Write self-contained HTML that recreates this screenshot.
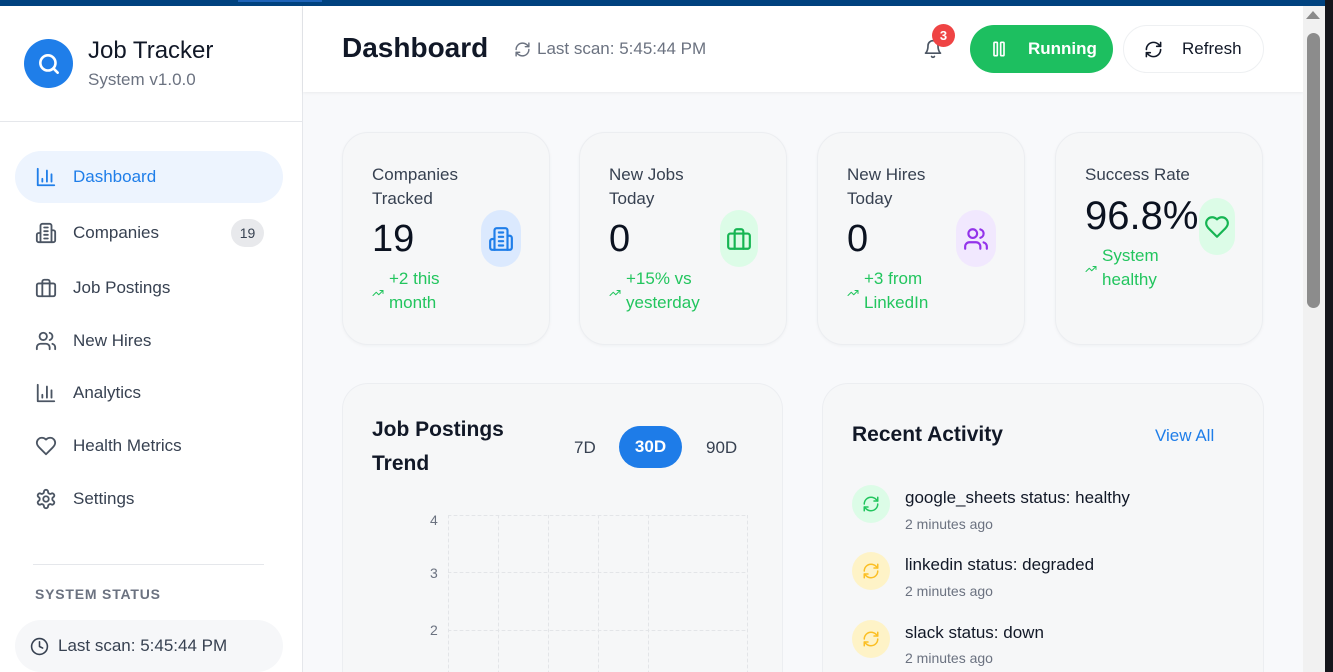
<!DOCTYPE html>
<html><head><meta charset="utf-8"><style>
*{margin:0;padding:0;box-sizing:border-box}
html{width:1333px;height:672px;overflow:hidden}
body{width:1333px;height:672px;overflow:hidden;font-family:"Liberation Sans",sans-serif;background:#f8f9fb;position:relative;color:#111827}
.a{position:absolute}
svg{fill:none;stroke:currentColor;stroke-width:2;stroke-linecap:round;stroke-linejoin:round}
.nav{position:absolute;left:35px;font-size:17px;color:#374151;display:flex;align-items:center}
.nav svg{width:22px;height:22px;margin-right:16px;color:#4b5563}
.card{position:absolute;top:132px;width:208px;height:213px;background:#f6f7f8;border:1px solid #eceef1;border-radius:26px;box-shadow:0 1px 3px rgba(0,0,0,.04)}
.lbl{position:absolute;left:29px;top:30px;font-size:17px;line-height:24px;color:#374151}
.num{position:absolute;left:29px;top:85px;font-size:38px;color:#0b1220}
.tr{position:absolute;left:46px;top:134px;font-size:17px;line-height:24px;color:#22c55e}
.tri{position:absolute;left:29px;top:154px;width:12px;height:12px;color:#22c55e}
.pill{position:absolute;left:138px;top:77px;width:40px;height:57px;border-radius:20px;display:flex;align-items:center;justify-content:center}
.pill svg{width:26px;height:26px}
.ai{position:absolute;left:852px;width:38px;height:38px;border-radius:50%;display:flex;align-items:center;justify-content:center}
.ai svg{width:18px;height:18px}
.at{position:absolute;left:905px;font-size:17px;color:#111827}
.am{position:absolute;left:905px;font-size:14px;color:#6b7280}
</style></head><body>
<div class="a" style="left:0;top:0;width:1333px;height:6px;background:#00427f"></div>
<div class="a" style="left:238px;top:0;width:84px;height:2px;background:#1d63b8"></div>

<!-- sidebar -->
<div class="a" style="left:0;top:6px;width:303px;height:666px;background:#fff;border-right:1px solid #e5e7eb"></div>
<div class="a" style="left:24px;top:39px;width:49px;height:49px;border-radius:50%;background:#1f7ee9;display:flex;align-items:center;justify-content:center"><svg viewBox="0 0 24 24" style="width:26px;height:26px;color:#fff;stroke-width:2.4"><circle cx="11" cy="11" r="7"/><path d="M20 20l-4-4"/></svg></div>
<div class="a" style="left:88px;top:37px;font-size:24px;color:#111827">Job Tracker</div>
<div class="a" style="left:88px;top:70px;font-size:17px;color:#6b7280">System v1.0.0</div>
<div class="a" style="left:0;top:121px;width:302px;height:1px;background:#e5e7eb"></div>
<div class="a" style="left:15px;top:151px;width:268px;height:52px;border-radius:26px;background:#edf4fe"></div>
<div class="nav" style="top:166px;color:#1f7ee9"><svg viewBox="0 0 24 24" style="color:#1f7ee9"><path d="M3 3v18h18"/><path d="M18 17V9M13 17V5M8 17v-3"/></svg>Dashboard</div>
<div class="nav" style="top:222px"><svg viewBox="0 0 24 24"><path d="M6 22V4a2 2 0 0 1 2-2h8a2 2 0 0 1 2 2v18Z"/><path d="M6 12H4a2 2 0 0 0-2 2v6a2 2 0 0 0 2 2h2"/><path d="M18 9h2a2 2 0 0 1 2 2v9a2 2 0 0 1-2 2h-2"/><path d="M10 6h4M10 10h4M10 14h4M10 18h4"/></svg>Companies</div>
<div class="a" style="left:231px;top:219px;width:33px;height:28px;border-radius:14px;background:#e8e9ec;font-size:14px;color:#374151;text-align:center;line-height:28px">19</div>
<div class="nav" style="top:277px"><svg viewBox="0 0 24 24"><rect x="2" y="7" width="20" height="14" rx="2"/><path d="M16 21V5a2 2 0 0 0-2-2h-4a2 2 0 0 0-2 2v16"/></svg>Job Postings</div>
<div class="nav" style="top:330px"><svg viewBox="0 0 24 24"><path d="M16 21v-2a4 4 0 0 0-4-4H6a4 4 0 0 0-4 4v2"/><circle cx="9" cy="7" r="4"/><path d="M22 21v-2a4 4 0 0 0-3-3.87M16 3.13a4 4 0 0 1 0 7.75"/></svg>New Hires</div>
<div class="nav" style="top:382px"><svg viewBox="0 0 24 24"><path d="M3 3v18h18"/><path d="M18 17V9M13 17V5M8 17v-3"/></svg>Analytics</div>
<div class="nav" style="top:435px"><svg viewBox="0 0 24 24"><path d="M19 14c1.49-1.46 3-3.21 3-5.5A5.5 5.5 0 0 0 16.5 3c-1.760 0-3 .5-4.5 2-1.5-1.5-2.74-2-4.5-2A5.5 5.5 0 0 0 2 8.5c0 2.3 1.5 4.05 3 5.5l7 7Z"/></svg>Health Metrics</div>
<div class="nav" style="top:488px"><svg viewBox="0 0 24 24"><path d="M12.22 2h-.44a2 2 0 0 0-2 2v.18a2 2 0 0 1-1 1.73l-.43.25a2 2 0 0 1-2 0l-.15-.08a2 2 0 0 0-2.73.73l-.22.38a2 2 0 0 0 .73 2.73l.15.1a2 2 0 0 1 1 1.72v.51a2 2 0 0 1-1 1.74l-.15.09a2 2 0 0 0-.73 2.73l.22.38a2 2 0 0 0 2.73.73l.15-.08a2 2 0 0 1 2 0l.43.25a2 2 0 0 1 1 1.73V20a2 2 0 0 0 2 2h.44a2 2 0 0 0 2-2v-.18a2 2 0 0 1 1-1.73l.43-.25a2 2 0 0 1 2 0l.15.08a2 2 0 0 0 2.73-.73l.22-.39a2 2 0 0 0-.73-2.73l-.15-.08a2 2 0 0 1-1-1.74v-.5a2 2 0 0 1 1-1.74l.15-.09a2 2 0 0 0 .73-2.73l-.22-.38a2 2 0 0 0-2.73-.73l-.15.08a2 2 0 0 1-2 0l-.43-.25a2 2 0 0 1-1-1.73V4a2 2 0 0 0-2-2z"/><circle cx="12" cy="12" r="3"/></svg>Settings</div>
<div class="a" style="left:33px;top:564px;width:231px;height:1px;background:#e5e7eb"></div>
<div class="a" style="left:35px;top:586px;font-size:14px;font-weight:bold;letter-spacing:.8px;color:#6b7280">SYSTEM STATUS</div>
<div class="a" style="left:15px;top:620px;width:268px;height:52px;border-radius:26px;background:#f6f7f9"></div>
<div class="a" style="left:30px;top:636px;display:flex;align-items:center;font-size:17px;color:#374151"><svg viewBox="0 0 24 24" style="width:19px;height:19px;margin-right:9px"><circle cx="12" cy="12" r="10"/><path d="M12 6v6l4 2"/></svg>Last scan: 5:45:44 PM</div>

<!-- header -->
<div class="a" style="left:303px;top:6px;width:1000px;height:86px;background:#fff;box-shadow:0 1px 3px rgba(0,0,0,.06)"></div>
<div class="a" style="left:342px;top:32px;font-size:28px;font-weight:bold;color:#111827">Dashboard</div>
<div class="a" style="left:514px;top:39px;display:flex;align-items:center;font-size:17px;color:#6b7280"><svg viewBox="0 0 24 24" style="width:17px;height:17px;margin-right:6px"><path d="M3 12a9 9 0 0 1 9-9 9.75 9.75 0 0 1 6.74 2.74L21 8"/><path d="M21 3v5h-5"/><path d="M21 12a9 9 0 0 1-9 9 9.75 9.75 0 0 1-6.74-2.74L3 16"/><path d="M8 16H3v5"/></svg>Last scan: 5:45:44 PM</div>
<svg class="a" viewBox="0 0 24 24" style="left:923px;top:39px;width:20px;height:20px;color:#4b5563"><path d="M6 8a6 6 0 0 1 12 0c0 7 3 9 3 9H3s3-2 3-9"/><path d="M10.3 21a1.94 1.94 0 0 0 3.4 0"/></svg>
<div class="a" style="left:932px;top:24px;width:23px;height:23px;border-radius:50%;background:#ef4444;color:#fff;font-size:13px;font-weight:bold;text-align:center;line-height:23px">3</div>
<div class="a" style="left:970px;top:25px;width:143px;height:48px;border-radius:24px;background:#1dbf60;color:#fff;font-size:17px;font-weight:bold;display:flex;align-items:center"><svg viewBox="0 0 24 24" style="width:20px;height:20px;margin-left:19px;margin-right:19px;stroke-width:2"><rect x="6" y="4" width="4" height="16" rx="1"/><rect x="14" y="4" width="4" height="16" rx="1"/></svg>Running</div>
<div class="a" style="left:1123px;top:25px;width:141px;height:48px;border-radius:24px;background:#fff;border:1px solid #eef0f2;color:#111827;font-size:17px;display:flex;align-items:center"><svg viewBox="0 0 24 24" style="width:19px;height:19px;margin-left:20px;margin-right:19px"><path d="M3 12a9 9 0 0 1 9-9 9.75 9.75 0 0 1 6.74 2.74L21 8"/><path d="M21 3v5h-5"/><path d="M21 12a9 9 0 0 1-9 9 9.75 9.75 0 0 1-6.74-2.74L3 16"/><path d="M8 16H3v5"/></svg>Refresh</div>

<!-- stat cards -->
<div class="card" style="left:342px"><div class="lbl">Companies<br>Tracked</div><div class="num">19</div>
<div class="pill" style="background:#dbe9fe;color:#1f7ee9"><svg viewBox="0 0 24 24"><path d="M6 22V4a2 2 0 0 1 2-2h8a2 2 0 0 1 2 2v18Z"/><path d="M6 12H4a2 2 0 0 0-2 2v6a2 2 0 0 0 2 2h2"/><path d="M18 9h2a2 2 0 0 1 2 2v9a2 2 0 0 1-2 2h-2"/><path d="M10 6h4M10 10h4M10 14h4M10 18h4"/></svg></div>
<svg class="tri" viewBox="0 0 24 24"><polyline points="22 7 13.5 15.5 8.5 10.5 2 17"/><polyline points="16 7 22 7 22 13"/></svg><div class="tr">+2 this<br>month</div></div>
<div class="card" style="left:579px"><div class="lbl">New Jobs<br>Today</div><div class="num">0</div>
<div class="pill" style="background:#dcfce7;color:#16b553;width:38px;left:140px"><svg viewBox="0 0 24 24"><rect x="2" y="7" width="20" height="14" rx="2"/><path d="M16 21V5a2 2 0 0 0-2-2h-4a2 2 0 0 0-2 2v16"/></svg></div>
<svg class="tri" viewBox="0 0 24 24"><polyline points="22 7 13.5 15.5 8.5 10.5 2 17"/><polyline points="16 7 22 7 22 13"/></svg><div class="tr">+15% vs<br>yesterday</div></div>
<div class="card" style="left:817px"><div class="lbl">New Hires<br>Today</div><div class="num">0</div>
<div class="pill" style="background:#f1e8fe;color:#9333ea"><svg viewBox="0 0 24 24"><path d="M16 21v-2a4 4 0 0 0-4-4H6a4 4 0 0 0-4 4v2"/><circle cx="9" cy="7" r="4"/><path d="M22 21v-2a4 4 0 0 0-3-3.87M16 3.13a4 4 0 0 1 0 7.75"/></svg></div>
<svg class="tri" viewBox="0 0 24 24"><polyline points="22 7 13.5 15.5 8.5 10.5 2 17"/><polyline points="16 7 22 7 22 13"/></svg><div class="tr">+3 from<br>LinkedIn</div></div>
<div class="card" style="left:1055px"><div class="lbl">Success Rate</div><div class="num" style="top:61px;font-size:40px">96.8%</div>
<div class="pill" style="background:#dcfce7;color:#16b553;left:143px;top:65px;width:36px"><svg viewBox="0 0 24 24"><path d="M19 14c1.49-1.46 3-3.21 3-5.5A5.5 5.5 0 0 0 16.5 3c-1.76 0-3 .5-4.5 2-1.5-1.5-2.74-2-4.5-2A5.5 5.5 0 0 0 2 8.5c0 2.3 1.5 4.05 3 5.5l7 7Z"/></svg></div>
<svg class="tri" viewBox="0 0 24 24" style="top:130px"><polyline points="22 7 13.5 15.5 8.5 10.5 2 17"/><polyline points="16 7 22 7 22 13"/></svg><div class="tr" style="top:111px">System<br>healthy</div></div>

<!-- chart panel -->
<div class="a" style="left:342px;top:383px;width:441px;height:289px;background:#f6f7f8;border:1px solid #eceef1;border-bottom:none;border-radius:26px 26px 0 0"></div>
<div class="a" style="left:372px;top:413px;font-size:21px;line-height:34px;font-weight:bold;color:#111827">Job Postings<br>Trend</div>
<div class="a" style="left:574px;top:438px;font-size:17px;color:#374151">7D</div>
<div class="a" style="left:619px;top:426px;width:63px;height:42px;border-radius:21px;background:#1e7ce8;color:#fff;font-size:17px;font-weight:bold;text-align:center;line-height:42px">30D</div>
<div class="a" style="left:706px;top:438px;font-size:17px;color:#374151">90D</div>
<div class="a" style="left:430px;top:512px;font-size:14px;color:#6b7280">4</div>
<div class="a" style="left:430px;top:565px;font-size:14px;color:#6b7280">3</div>
<div class="a" style="left:430px;top:622px;font-size:14px;color:#6b7280">2</div>
<svg class="a" style="left:448px;top:515px;width:300px;height:157px;stroke:#e3e5e8;stroke-width:1;stroke-dasharray:3 3"><path d="M0 .5H300M0 57.5H300M0 115.5H300M.5 0V157M50.5 0V157M100.5 0V157M150.5 0V157M200.5 0V157M299.5 0V157"/></svg>

<!-- activity panel -->
<div class="a" style="left:822px;top:383px;width:442px;height:289px;background:#f6f7f8;border:1px solid #eceef1;border-bottom:none;border-radius:26px 26px 0 0"></div>
<div class="a" style="left:852px;top:423px;font-size:21px;font-weight:bold;color:#111827">Recent Activity</div>
<div class="a" style="left:1155px;top:426px;font-size:17px;color:#1f7ee9">View All</div>
<div class="ai" style="top:485px;background:#dcfce7;color:#22c55e"><svg viewBox="0 0 24 24"><path d="M3 12a9 9 0 0 1 9-9 9.75 9.75 0 0 1 6.74 2.74L21 8"/><path d="M21 3v5h-5"/><path d="M21 12a9 9 0 0 1-9 9 9.75 9.75 0 0 1-6.74-2.74L3 16"/><path d="M8 16H3v5"/></svg></div>
<div class="at" style="top:488px">google_sheets status: healthy</div><div class="am" style="top:516px">2 minutes ago</div>
<div class="ai" style="top:552px;background:#fef3c7;color:#fbbf24"><svg viewBox="0 0 24 24"><path d="M3 12a9 9 0 0 1 9-9 9.75 9.75 0 0 1 6.74 2.74L21 8"/><path d="M21 3v5h-5"/><path d="M21 12a9 9 0 0 1-9 9 9.75 9.75 0 0 1-6.74-2.74L3 16"/><path d="M8 16H3v5"/></svg></div>
<div class="at" style="top:555px">linkedin status: degraded</div><div class="am" style="top:583px">2 minutes ago</div>
<div class="ai" style="top:620px;background:#fef3c7;color:#fbbf24"><svg viewBox="0 0 24 24"><path d="M3 12a9 9 0 0 1 9-9 9.75 9.75 0 0 1 6.74 2.74L21 8"/><path d="M21 3v5h-5"/><path d="M21 12a9 9 0 0 1-9 9 9.75 9.75 0 0 1-6.74-2.74L3 16"/><path d="M8 16H3v5"/></svg></div>
<div class="at" style="top:623px">slack status: down</div><div class="am" style="top:650px">2 minutes ago</div>

<!-- scrollbar -->
<div class="a" style="left:1303px;top:6px;width:22px;height:666px;background:#f1f1f1"></div>
<div class="a" style="left:1306px;top:11px;width:0;height:0;border-left:7px solid transparent;border-right:7px solid transparent;border-bottom:8px solid #8a8a8a"></div>
<div class="a" style="left:1307px;top:33px;width:13px;height:275px;border-radius:7px;background:#8c8c8c"></div>
<div class="a" style="left:1325px;top:0;width:8px;height:672px;background:#15161c"></div>
</body></html>
